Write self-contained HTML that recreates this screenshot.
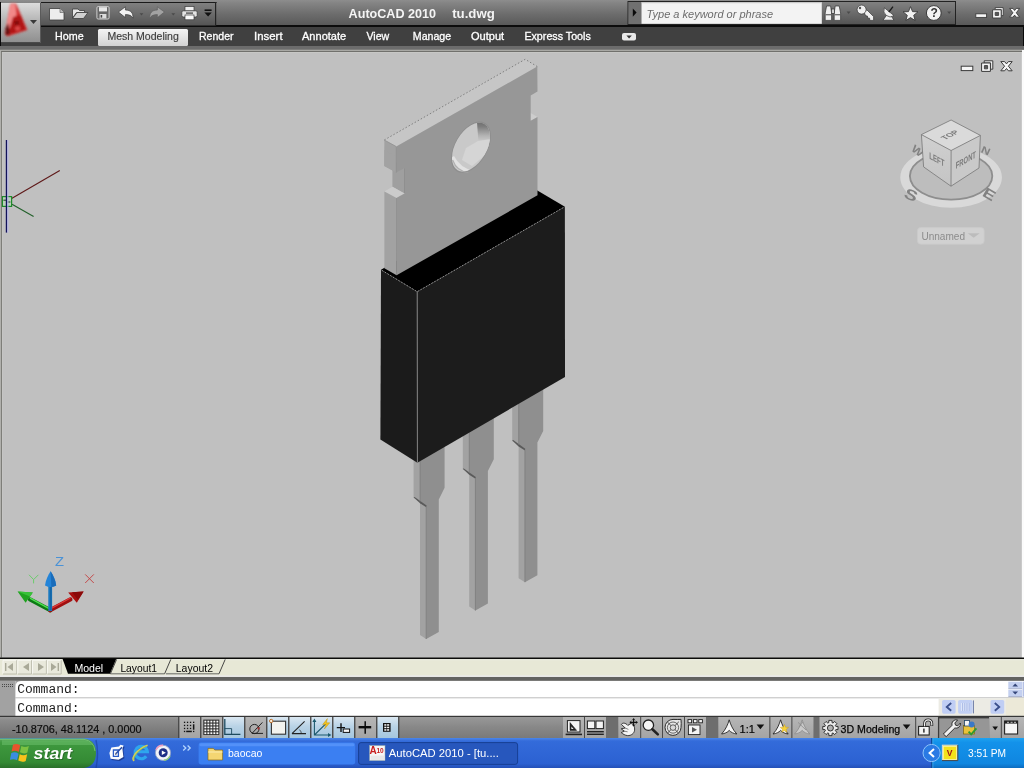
<!DOCTYPE html>
<html><head><meta charset="utf-8"><title>AutoCAD 2010</title>
<style>
html,body{margin:0;padding:0;background:#c0c0c0;overflow:hidden}
body{width:1024px;height:768px;position:relative;font-family:"Liberation Sans",sans-serif}
svg{position:absolute;left:0;top:0;display:block;will-change:transform;transform:translateZ(0)}
text{font-family:"Liberation Sans",sans-serif}
.mono{font-family:"Liberation Mono",monospace}
</style></head><body>
<svg width="1024" height="768" viewBox="0 0 1024 768">
<defs>
<linearGradient id="gTitle" x1="0" y1="0" x2="0" y2="1">
 <stop offset="0" stop-color="#8d8d8d"/><stop offset="0.12" stop-color="#848484"/>
 <stop offset="0.55" stop-color="#6c6c6c"/><stop offset="1" stop-color="#585858"/>
</linearGradient>
<linearGradient id="gQat" x1="0" y1="0" x2="0" y2="1">
 <stop offset="0" stop-color="#818181"/><stop offset="0.5" stop-color="#6b6b6b"/><stop offset="1" stop-color="#545454"/>
</linearGradient>
<linearGradient id="gTab" x1="0" y1="0" x2="0" y2="1">
 <stop offset="0" stop-color="#f4f4f4"/><stop offset="0.5" stop-color="#e4e4e4"/><stop offset="1" stop-color="#d2d2d2"/>
</linearGradient>
<linearGradient id="gApp" x1="0" y1="0" x2="0" y2="1">
 <stop offset="0" stop-color="#dcdcdc"/><stop offset="0.45" stop-color="#b4b4b4"/><stop offset="1" stop-color="#8e8e8e"/>
</linearGradient>
<linearGradient id="gStatus" x1="0" y1="0" x2="0" y2="1">
 <stop offset="0" stop-color="#9a9a9a"/><stop offset="0.5" stop-color="#888888"/><stop offset="1" stop-color="#7a7a7a"/>
</linearGradient>
<linearGradient id="gCoord" x1="0" y1="0" x2="0" y2="1">
 <stop offset="0" stop-color="#989898"/><stop offset="0.15" stop-color="#8c8c8c"/><stop offset="1" stop-color="#707070"/>
</linearGradient>
<linearGradient id="gBtnOff" x1="0" y1="0" x2="0" y2="1">
 <stop offset="0" stop-color="#b6b6b6"/><stop offset="1" stop-color="#a4a4a4"/>
</linearGradient>
<linearGradient id="gBtnOn" x1="0" y1="0" x2="0" y2="1">
 <stop offset="0" stop-color="#dbe8f2"/><stop offset="0.45" stop-color="#b9d3e6"/><stop offset="1" stop-color="#a5c6de"/>
</linearGradient>
<linearGradient id="gTask" x1="0" y1="0" x2="0" y2="1">
 <stop offset="0" stop-color="#4479e2"/><stop offset="0.12" stop-color="#336bda"/>
 <stop offset="0.85" stop-color="#2c61d2"/><stop offset="1" stop-color="#2450b8"/>
</linearGradient>
<linearGradient id="gStart" x1="0" y1="0" x2="0" y2="1">
 <stop offset="0" stop-color="#5aa65a"/><stop offset="0.15" stop-color="#3f993f"/>
 <stop offset="0.8" stop-color="#348a34"/><stop offset="1" stop-color="#2a702a"/>
</linearGradient>
<linearGradient id="gTray" x1="0" y1="0" x2="0" y2="1">
 <stop offset="0" stop-color="#1ea2f0"/><stop offset="0.15" stop-color="#1392ea"/>
 <stop offset="0.85" stop-color="#0f86e0"/><stop offset="1" stop-color="#0c6cc0"/>
</linearGradient>
<linearGradient id="gHole" x1="1" y1="0" x2="0.3" y2="0.7">
 <stop offset="0" stop-color="#6e6e6e"/><stop offset="0.22" stop-color="#9c9c9c"/>
 <stop offset="0.4" stop-color="#c6c6c6"/><stop offset="1" stop-color="#d0d0d0"/>
</linearGradient>
<linearGradient id="gHoleD" x1="0" y1="0" x2="0" y2="1">
 <stop offset="0" stop-color="#6a6a6a"/><stop offset="0.3" stop-color="#7c7c7c"/><stop offset="0.75" stop-color="#b4b4b4"/><stop offset="1" stop-color="#c9c9c9"/>
</linearGradient>
<linearGradient id="gCubeL" x1="0" y1="0" x2="0" y2="1">
 <stop offset="0" stop-color="#d0d0d0"/><stop offset="1" stop-color="#c4c4c4"/>
</linearGradient>
<filter id="fBlur2" x="-20%" y="-20%" width="140%" height="140%"><feGaussianBlur stdDeviation="0.9"/></filter>
<filter id="fBlur1" x="-20%" y="-20%" width="140%" height="140%"><feGaussianBlur stdDeviation="0.7"/></filter>
</defs>
<rect x="0" y="0" width="1024" height="768" fill="#c0c0c0"/>
<rect x="0" y="0" width="1024" height="26" fill="url(#gTitle)"/>
<rect x="0" y="25" width="1024" height="2" fill="#0c0c0c"/>
<rect x="0" y="27" width="1024" height="19" fill="#404040"/>
<rect x="0" y="46" width="1024" height="4" fill="#6c6c6c"/>
<rect x="0" y="49.7" width="1024" height="1.3" fill="#a8a8a4"/>
<rect x="0" y="51" width="1024" height="1" fill="#70706c"/>
<rect x="0" y="52" width="1024" height="0.6" fill="#cbcbc9"/>
<rect x="0" y="50" width="1.2" height="607.5" fill="#b0b0ac"/>
<rect x="1.2" y="51" width="0.8" height="606.5" fill="#6e6e6a"/>
<rect x="2" y="52" width="0.6" height="606" fill="#c8c8c6"/>
<rect x="1021.4" y="52" width="0.6" height="606" fill="#d0d0d0"/>
<rect x="1022" y="50" width="2" height="608" fill="#fcfcfc"/>
<rect x="0" y="2" width="1" height="44" fill="#0a0a0a"/>
<rect x="1023" y="27" width="1" height="19" fill="#0a0a0a"/>
<polygon points="512.2,343.2 518.7,347.2 518.7,444.8 512.2,441.1" fill="#a2a2a2"/>
<polygon points="518.6,444.7 524.9,449.7 524.9,582.2 518.6,578.2" fill="#a2a2a2"/>
<polygon points="518.7,347.2 543.2,333.2 543.2,430.9 537.4,442.6 537.4,575.2 524.9,582.2 524.9,449.7 518.7,444.8" fill="#8f8f8f"/>
<polygon points="512.2,440.5 513.2,440.1 525.2,448.8 524.9,450.4 518.6,446.4" fill="#5a5a5a"/>
<path d="M518.7,347.2V444.8M524.9,449.7V582.2" stroke="#7a7a7a" stroke-width="0.8" fill="none"/>
<polygon points="462.8,371.5 469.3,375.5 469.3,473.1 462.8,469.4" fill="#a2a2a2"/>
<polygon points="469.2,473.0 475.4,478.0 475.4,610.5 469.2,606.5" fill="#a2a2a2"/>
<polygon points="469.3,375.5 493.8,361.5 493.8,459.2 487.9,470.9 487.9,603.5 475.4,610.5 475.4,478.0 469.3,473.1" fill="#8f8f8f"/>
<polygon points="462.8,468.8 463.8,468.4 475.8,477.1 475.4,478.7 469.2,474.7" fill="#5a5a5a"/>
<path d="M469.3,375.5V473.1M475.4,478.0V610.5" stroke="#7a7a7a" stroke-width="0.8" fill="none"/>
<polygon points="413.6,400.0 420.1,404.0 420.1,501.6 413.6,497.9" fill="#a2a2a2"/>
<polygon points="420.0,501.5 426.2,506.5 426.2,639.0 420.0,635.0" fill="#a2a2a2"/>
<polygon points="420.1,404.0 444.6,390.0 444.6,487.7 438.8,499.4 438.8,632.0 426.2,639.0 426.2,506.5 420.1,501.6" fill="#8f8f8f"/>
<polygon points="413.6,497.3 414.6,496.9 426.6,505.6 426.2,507.2 420.0,503.2" fill="#5a5a5a"/>
<path d="M420.1,404.0V501.6M426.2,506.5V639.0" stroke="#7a7a7a" stroke-width="0.8" fill="none"/>
<polygon points="381.0,269.8 417.2,291.7 564.9,206.8 528.9,185.5" fill="#000000"/>
<polygon points="381.0,269.8 417.2,291.7 417.4,462.7 380.4,439.5" fill="#1b1b1b"/>
<polygon points="417.2,291.7 564.9,206.8 565.0,377.0 417.4,462.7" fill="#1c1c1c"/>
<path d="M417.2,291.7L417.4,462.7" stroke="#8a8a8a" stroke-width="0.9"/>
<path d="M382.0,270.40000000000003L417.2,291.7L563.9,207.20000000000002" stroke="#9a9a9a" stroke-width="0.9" stroke-dasharray="1.6 1.6" fill="none"/>
<polygon points="396.3,146.6 384.3,140.0 525.3,59.3 537.3,66.6" fill="#c6c6c6"/>
<polygon points="384.3,140.0 396.3,146.6 396.3,172.6 384.3,166.0" fill="#a2a2a2"/>
<polygon points="392.4,160.0 404.5,168.0 404.5,193.4 392.4,186.8" fill="#9f9f9f"/>
<polygon points="384.3,150.0 396.3,156.6 396.3,172.6 384.3,166.0" fill="#a2a2a2"/>
<polygon points="396.4,198.0 404.5,193.4 392.5,186.8 384.4,191.4" fill="#cbcbcb"/>
<polygon points="384.4,191.4 396.4,198.0 396.6,275.3 384.4,268.3" fill="#a2a2a2"/>
<polygon points="530.7,120.8 537.5,117.0 525.5,110.0 518.7,113.8" fill="#cdcdcd"/>
<polygon points="396.3,146.6 537.3,66.6 537.5,91.5 530.7,95.4 530.7,120.8 537.5,117.0 537.5,195.3 396.6,275.3 396.4,198.0 404.5,193.4 404.5,168.0 396.3,172.6" fill="#979797"/>
<path d="M384.3,140.0L525.2,59.3L537.3,66.6" stroke="#6e6e6e" stroke-width="0.8" stroke-dasharray="1.5 2" fill="none"/>
<path d="M384.3,140.0L396.3,146.6" stroke="#8c8c8c" stroke-width="0.7" fill="none"/>
<path d="M396.3,147V172.6M396.5,198V275" stroke="#8e8e8e" stroke-width="0.8" fill="none"/>
<path d="M404.5,168.2V193" stroke="#8a8a8a" stroke-width="0.8" fill="none"/>
<circle r="1.05" transform="matrix(19,-10.8,0,21.9,471.0,147.2)" fill="#8e8e8e"/>
<clipPath id="cpHole"><circle r="1" transform="matrix(19,-10.8,0,21.9,471.0,147.2)"/></clipPath>
<g clip-path="url(#cpHole)"><rect x="448" y="118" width="46" height="60" fill="#c9c9c9"/><polygon points="476.8,120 492,120 492,141 478.4,141" fill="url(#gHoleD)"/><g filter="url(#fBlur1)"><polygon points="466,148 478,141 491,139 491,150 472,166 462,160" fill="#d5d5d5"/><path d="M451,158 Q456,172 470,175 L474,171 Q460,168 454,156Z" fill="#e2e2e2"/></g></g>
<path d="M452.6,160 Q457,171.6 468.4,172.6" stroke="#a2a2a2" stroke-width="1.2" fill="none" opacity="0.8"/>
<rect x="1" y="3" width="40" height="40" fill="url(#gApp)"/>
<rect x="1" y="42" width="40" height="1" fill="#4a4a4a"/>
<rect x="40" y="3" width="1" height="40" fill="#5a5a5a"/>
<g filter="url(#fBlur2)"><polygon points="10.5,3.6 16,3.6 27.4,30 7,36.4 4.8,33.4" fill="#d42e2e"/><polygon points="10,4 15.4,3.8 16.4,15 9,29 5.6,32" fill="#f28888"/><polygon points="13,17 20.4,15 26,29.4 8,34.6" fill="#b01616"/><polygon points="5.6,28 8.6,23 9.6,34.4 5.6,35" fill="#5e1212"/><polygon points="14,21.4 18.4,20.4 19.4,24 15,25" fill="#7e0e0e"/><polygon points="15,27 19.4,26 20.4,30 16,31" fill="#dc4a4a"/></g>
<polygon points="30,20 37,20 33.5,24" fill="#3a3a3a"/>
<rect x="41" y="2.5" width="174.6" height="23" fill="url(#gQat)"/>
<rect x="41" y="2" width="175.6" height="1" fill="#1a1a1a"/>
<rect x="215" y="2" width="1.2" height="24" fill="#242424"/>
<path d="M49.5,8.5H60L64,12.5V20H49.5Z" fill="#ededed" stroke="#3c3c3c" stroke-width="0.8"/><path d="M60,8.5V12.5H64" fill="#bdbdbd" stroke="#555" stroke-width="0.6"/>
<path d="M72.5,9H78L79.5,10.5H84.5V12.5H76.5L72.5,18Z" fill="#e6e6e6" stroke="#3c3c3c" stroke-width="0.8"/><path d="M77,12.5H88L83.5,18.5H72.5Z" fill="#d0d0d0" stroke="#3c3c3c" stroke-width="0.8"/>
<rect x="96.9" y="6.6" width="12.2" height="12.4" rx="1.2" fill="#666" stroke="#cfcfcf" stroke-width="1"/><rect x="99" y="7.2" width="8" height="4.2" fill="#e8e8e8"/><rect x="99.6" y="14" width="6.8" height="4.4" fill="#dcdcdc"/><rect x="100.6" y="15" width="1.6" height="2.6" fill="#444"/>
<path d="M118.4,12L125.4,6.8V10C131,10 133.2,13 133,18.2C131.4,15.6 129.6,14.6 125.4,14.6V17.6Z" fill="#f2f2f2" stroke="#3c3c3c" stroke-width="0.7"/>
<polygon points="139.6,13.2 143.4,13.2 141.5,15.6" fill="#4a4a4a"/>
<path d="M164.4,12L157.4,6.8V10C151.8,10 149.6,13 149.8,18.2C151.4,15.6 153.2,14.6 157.4,14.6V17.6Z" fill="#a2a2a2" stroke="#5a5a5a" stroke-width="0.6"/>
<polygon points="171.4,13.2 175.2,13.2 173.3,15.6" fill="#4a4a4a"/>
<rect x="185" y="6.5" width="9" height="4.5" fill="#f0f0f0" stroke="#3c3c3c" stroke-width="0.7"/><rect x="181.8" y="10.8" width="15.4" height="6.2" rx="1.4" fill="#e4e4e4" stroke="#3c3c3c" stroke-width="0.8"/><rect x="185" y="15" width="9" height="4.8" fill="#fafafa" stroke="#3c3c3c" stroke-width="0.7"/><rect x="186" y="12.4" width="7" height="1.4" fill="#555"/>
<rect x="204.6" y="9.4" width="7" height="1.6" fill="#111"/><polygon points="204.4,12.4 211.8,12.4 208.1,16.4" fill="#111"/>
<text x="348.6" y="18.2" font-size="13.6" font-weight="bold" fill="#f4f4f4" textLength="87.5" lengthAdjust="spacingAndGlyphs">AutoCAD 2010</text>
<text x="452.2" y="18.2" font-size="13.6" font-weight="bold" fill="#f4f4f4" textLength="42.6" lengthAdjust="spacingAndGlyphs">tu.dwg</text>
<rect x="628" y="1.5" width="327.5" height="23" fill="#676767" stroke="#222" stroke-width="1"/>
<rect x="822" y="2" width="133" height="22" fill="url(#gQat)"/>
<rect x="628.5" y="2" width="13" height="22" fill="#707070"/>
<polygon points="632.8,8.5 636.6,12.6 632.8,16.8" fill="#0a0a0a"/>
<rect x="641.5" y="2.2" width="180.3" height="21.6" fill="#f3f3f3"/>
<rect x="641.5" y="2.2" width="180.3" height="1" fill="#c8c8c8"/>
<text x="646.6" y="17.6" font-size="11" font-style="italic" fill="#6c6c6c" textLength="126.5" lengthAdjust="spacingAndGlyphs">Type a keyword or phrase</text>
<g stroke="#333" stroke-width="0.7" fill="#efefef"><path d="M826.6,6H830.6L831.6,13V20.4H825.2V13Z"/><path d="M835.2,6H839.2L840.6,13V20.4H834.2V13Z"/><rect x="831.4" y="9" width="3" height="4.4" fill="#cfcfcf"/></g><rect x="825.6" y="14.2" width="5.6" height="1.1" fill="#555"/><rect x="834.6" y="14.2" width="5.6" height="1.1" fill="#555"/>
<polygon points="846.6,11.4 850.6,11.4 848.6,14" fill="#4a4a4a"/>
<g fill="#efefef" stroke="#333" stroke-width="0.7"><path d="M864.2,12.4L866.8,9.8L873.6,16.6V20.4H869.8L869.6,18.2L867.6,18L867.4,16L865.6,15.8Z"/><circle cx="861.6" cy="9.6" r="4.5"/></g><circle cx="860" cy="8" r="1.2" fill="#555"/>
<g fill="#efefef" stroke="#333" stroke-width="0.7"><path d="M886.6,15.2L883,20.2H894L890.8,15.6Z"/><path d="M884.4,7.8A6.4,6.4 0 0 0 894,15.6Z"/></g><path d="M888.8,12L893,6.6" stroke="#1a1a1a" stroke-width="1.3"/>
<path d="M910.5,6.6L912.5,11.6L917.9,11.9L913.7,15.3L915.1,20.5L910.5,17.6L905.9,20.5L907.3,15.3L903.1,11.9L908.5,11.6Z" fill="#f2f2f2" stroke="#2e2e2e" stroke-width="0.8"/>
<circle cx="933.8" cy="13" r="7.4" fill="#f2f2f2" stroke="#2e2e2e" stroke-width="0.9"/><text x="930.4" y="17.4" font-size="12" font-weight="bold" fill="#333">?</text>
<polygon points="947.2,11.4 951.2,11.4 949.2,14" fill="#4a4a4a"/>
<g fill="#f6f6f6" stroke="#3c3c3c" stroke-width="0.9"><rect x="975.8" y="13.8" width="10.8" height="3.6"/><path d="M995.2,7.6H1003.2V15.6H1001.2V9.6H995.2Z"/><path d="M992.6,9.8H1001.2V18H992.6ZM995.2,12.4V15.4H998.6V12.4Z" fill-rule="evenodd"/><path d="M1009.6,8.4L1013.0,8.4L1014.6,10.5L1016.2,8.4L1019.6,8.4L1016.3,12.8L1019.6,17.2L1016.2,17.2L1014.6,15.1L1013.0,17.2L1009.6,17.2L1012.9,12.8Z"/></g><rect x="995.4" y="12.6" width="3" height="2.6" fill="#555"/>
<rect x="98" y="29" width="90" height="17" rx="1.5" fill="url(#gTab)"/>
<text x="55" y="40" font-size="11" fill="#fff" stroke="#ffffff" stroke-width="0.3" textLength="28.6" lengthAdjust="spacingAndGlyphs">Home</text>
<text x="107.4" y="40" font-size="11" fill="#3c3c3c" stroke="#3c3c3c" stroke-width="0.15" textLength="71.4" lengthAdjust="spacingAndGlyphs">Mesh Modeling</text>
<text x="199" y="40" font-size="11" fill="#fff" stroke="#ffffff" stroke-width="0.3" textLength="34.6" lengthAdjust="spacingAndGlyphs">Render</text>
<text x="254" y="40" font-size="11" fill="#fff" stroke="#ffffff" stroke-width="0.3" textLength="28.6" lengthAdjust="spacingAndGlyphs">Insert</text>
<text x="302" y="40" font-size="11" fill="#fff" stroke="#ffffff" stroke-width="0.3" textLength="44.2" lengthAdjust="spacingAndGlyphs">Annotate</text>
<text x="366.4" y="40" font-size="11" fill="#fff" stroke="#ffffff" stroke-width="0.3" textLength="22.8" lengthAdjust="spacingAndGlyphs">View</text>
<text x="412.8" y="40" font-size="11" fill="#fff" stroke="#ffffff" stroke-width="0.3" textLength="38.4" lengthAdjust="spacingAndGlyphs">Manage</text>
<text x="471" y="40" font-size="11" fill="#fff" stroke="#ffffff" stroke-width="0.3" textLength="33.2" lengthAdjust="spacingAndGlyphs">Output</text>
<text x="524.4" y="40" font-size="11" fill="#fff" stroke="#ffffff" stroke-width="0.3" textLength="66.4" lengthAdjust="spacingAndGlyphs">Express Tools</text>
<rect x="622" y="33" width="14" height="7.4" rx="2" fill="#e8e8e8"/><polygon points="626.4,35.4 631.8,35.4 629.1,38.4" fill="#333"/>
<g fill="#f6f6f6" stroke="#3a3a3a" stroke-width="1"><rect x="961.2" y="66.2" width="11.6" height="4.4"/><path d="M984.2,60.8H992.8V69.2H990.6V63H984.2Z"/><path d="M981.6,63H990.4V71.4H981.6ZM984.4,65.6V68.8H987.6V65.6Z" fill-rule="evenodd"/><path d="M1000.8,61.6L1004.6,61.6L1006.5,63.9L1008.4,61.6L1012.2,61.6L1008.4,66.2L1012.2,70.8L1008.4,70.8L1006.5,68.5L1004.6,70.8L1000.8,70.8L1004.6,66.2Z"/></g><rect x="984.6" y="65.8" width="2.8" height="2.8" fill="#5a5a5a"/>
<rect x="0" y="657.5" width="1024" height="1.7" fill="#0c0c0a"/>
<rect x="0" y="659.2" width="1024" height="16.3" fill="#e7e8d6"/><rect x="0" y="659.2" width="1024" height="1" fill="#eeeee4"/>
<rect x="0" y="675.5" width="1024" height="1.4" fill="#fdfdfb"/>
<rect x="2.6" y="659.8" width="14.2" height="14.2" fill="#e9e9dc"/><path d="M3.0,674V660.2H16.8" stroke="#fbfbf6" stroke-width="0.9" fill="none"/><path d="M3.0,674H16.8V660.2" stroke="#b9b9aa" stroke-width="0.9" fill="none"/>
<rect x="17.4" y="659.8" width="14.2" height="14.2" fill="#e9e9dc"/><path d="M17.799999999999997,674V660.2H31.599999999999998" stroke="#fbfbf6" stroke-width="0.9" fill="none"/><path d="M17.799999999999997,674H31.599999999999998V660.2" stroke="#b9b9aa" stroke-width="0.9" fill="none"/>
<rect x="32.2" y="659.8" width="14.2" height="14.2" fill="#e9e9dc"/><path d="M32.6,674V660.2H46.400000000000006" stroke="#fbfbf6" stroke-width="0.9" fill="none"/><path d="M32.6,674H46.400000000000006V660.2" stroke="#b9b9aa" stroke-width="0.9" fill="none"/>
<rect x="47" y="659.8" width="14.2" height="14.2" fill="#e9e9dc"/><path d="M47.4,674V660.2H61.2" stroke="#fbfbf6" stroke-width="0.9" fill="none"/><path d="M47.4,674H61.2V660.2" stroke="#b9b9aa" stroke-width="0.9" fill="none"/>
<g fill="#a9a998"><rect x="5" y="663" width="1.4" height="8"/><polygon points="13,663 13,671 7.5,667"/><polygon points="29,663 29,671 23,667"/><polygon points="38,663 38,671 44,667"/><polygon points="51,663 51,671 56.5,667"/><rect x="57.6" y="663" width="1.4" height="8"/></g>
<polygon points="62.6,659 116.2,659 110,673.8 68,673.8" fill="#000"/>
<text x="74.4" y="671.8" font-size="11" fill="#fff" textLength="28.8" lengthAdjust="spacingAndGlyphs">Model</text>
<text x="120.4" y="671.8" font-size="11" fill="#000" textLength="36.6" lengthAdjust="spacingAndGlyphs">Layout1</text>
<text x="175.8" y="671.8" font-size="11" fill="#000" textLength="37.2" lengthAdjust="spacingAndGlyphs">Layout2</text>
<path d="M110.4,673.8L116.6,659.4M164.6,673.8L170.8,659.4M219,673.8L225.2,659.4" stroke="#333" stroke-width="0.9" fill="none"/><path d="M110.4,673.8H164.6M166,673.8H219" stroke="#4a4a4a" stroke-width="0.8" fill="none"/>
<path d="M117,660.5H170M171.5,660.5H225" stroke="#fff" stroke-width="0.6" fill="none" opacity="0"/>
<rect x="0" y="676.9" width="1024" height="4" fill="#626260"/>
<rect x="0" y="680.9" width="1024" height="35.1" fill="#ffffff"/>
<rect x="0" y="680.9" width="15.4" height="35.1" fill="#a2a2a2"/><path d="M15.4,687V681H21Q15.4,681 15.4,687Z" fill="#a2a2a2"/>
<path d="M15,716V684Q15,680.6 18.5,680.6" stroke="#888" stroke-width="0" fill="none"/>
<g fill="#4a4a4a"><rect x="2" y="684" width="1" height="1"/><rect x="2" y="686" width="1" height="1"/><rect x="4" y="684" width="1" height="1"/><rect x="4" y="686" width="1" height="1"/><rect x="6" y="684" width="1" height="1"/><rect x="6" y="686" width="1" height="1"/><rect x="8" y="684" width="1" height="1"/><rect x="8" y="686" width="1" height="1"/><rect x="10" y="684" width="1" height="1"/><rect x="10" y="686" width="1" height="1"/><rect x="12" y="684" width="1" height="1"/><rect x="12" y="686" width="1" height="1"/></g>
<rect x="15" y="697.3" width="1009" height="1" fill="#bcbcbc"/>
<text class="mono" x="17.2" y="693.2" font-size="12" fill="#1c1c1c" textLength="62.4" lengthAdjust="spacingAndGlyphs">Command:</text>
<text class="mono" x="17.2" y="712" font-size="12" fill="#1c1c1c" textLength="62.4" lengthAdjust="spacingAndGlyphs">Command:</text>
<rect x="1008.3" y="681.7" width="13.8" height="6.5" fill="#c4d0f0"/><rect x="1008.3" y="689.7" width="13.8" height="6.4" fill="#c4d0f0"/><rect x="1008.3" y="688.3" width="13.8" height="0.8" fill="#9aa6c6"/><rect x="1008.3" y="696.2" width="13.8" height="0.8" fill="#9aa6c6"/><rect x="1022.6" y="681.7" width="1.4" height="15" fill="#b4c0e4"/><polygon points="1012.4,686.4 1015.2,683.4 1018,686.4" fill="#35467a"/><polygon points="1012.4,691.6 1015.2,694.6 1018,691.6" fill="#35467a"/>
<rect x="938.6" y="698.3" width="85.4" height="17.5" fill="#ecebe4"/>
<rect x="1006" y="698.3" width="18" height="17.5" fill="#ece9d8"/>
<rect x="942.1" y="699.9" width="13.5" height="13.8" rx="1.6" fill="#c0cef4"/><rect x="990.5" y="699.9" width="13.7" height="13.8" rx="1.6" fill="#c0cef4"/><rect x="958.1" y="699.9" width="14.6" height="13.8" rx="1.6" fill="#c2d0f4"/><rect x="973" y="700.4" width="0.8" height="13" fill="#5c6c9c"/>
<path d="M951.2,703L946.8,706.9L951.2,710.8M994.8,703L999.2,706.9L994.8,710.8" stroke="#3a4f8c" stroke-width="1.9" fill="none"/>
<path d="M961.6,703V711M963.8,703V711M966,703V711M968.2,703V711" stroke="#e4ebfb" stroke-width="0.9"/><path d="M962.5,703V711M964.7,703V711M966.9,703V711M969.1,703V711" stroke="#9fb0dc" stroke-width="0.6"/>
<rect x="0" y="716" width="1024" height="22" fill="url(#gStatus)"/>
<rect x="0" y="715.8" width="1024" height="1.1" fill="#2c2c2c"/>
<rect x="0" y="717" width="178" height="21" fill="url(#gCoord)"/>
<text x="12" y="732.6" font-size="11" fill="#0c0c0c" stroke="#0c0c0c" stroke-width="0.2" textLength="129.5" lengthAdjust="spacingAndGlyphs">-10.8706, 48.1124 , 0.0000</text>
<rect x="179.3" y="717" width="21" height="21" fill="url(#gBtnOff)"/>
<rect x="178.2" y="717" width="1.1" height="21" fill="#3c3c3c"/>
<rect x="201.3" y="717" width="21" height="21" fill="url(#gBtnOff)"/>
<rect x="200.2" y="717" width="1.1" height="21" fill="#3c3c3c"/>
<rect x="223.3" y="717" width="21" height="21" fill="url(#gBtnOn)"/>
<rect x="222.2" y="717" width="1.1" height="21" fill="#3c3c3c"/>
<rect x="245.3" y="717" width="21" height="21" fill="url(#gBtnOff)"/>
<rect x="244.2" y="717" width="1.1" height="21" fill="#3c3c3c"/>
<rect x="267.3" y="717" width="21" height="21" fill="url(#gBtnOn)"/>
<rect x="266.2" y="717" width="1.1" height="21" fill="#3c3c3c"/>
<rect x="289.3" y="717" width="21" height="21" fill="url(#gBtnOn)"/>
<rect x="288.2" y="717" width="1.1" height="21" fill="#3c3c3c"/>
<rect x="311.3" y="717" width="21" height="21" fill="url(#gBtnOn)"/>
<rect x="310.2" y="717" width="1.1" height="21" fill="#3c3c3c"/>
<rect x="333.3" y="717" width="21" height="21" fill="url(#gBtnOn)"/>
<rect x="332.2" y="717" width="1.1" height="21" fill="#3c3c3c"/>
<rect x="355.3" y="717" width="21" height="21" fill="url(#gBtnOff)"/>
<rect x="354.2" y="717" width="1.1" height="21" fill="#3c3c3c"/>
<rect x="377.3" y="717" width="21" height="21" fill="url(#gBtnOn)"/>
<rect x="376.2" y="717" width="1.1" height="21" fill="#3c3c3c"/>
<rect x="398.2" y="717" width="1.1" height="21" fill="#3c3c3c"/>
<g fill="#141414"><rect x="183.9" y="721.6999999999999" width="1.3" height="1.3"/><rect x="183.9" y="724.8" width="1.3" height="1.3"/><rect x="183.9" y="727.8" width="1.3" height="1.3"/><rect x="186.9" y="721.6999999999999" width="1.3" height="1.3"/><rect x="186.9" y="724.8" width="1.3" height="1.3"/><rect x="186.9" y="727.8" width="1.3" height="1.3"/><rect x="189.9" y="721.6999999999999" width="1.3" height="1.3"/><rect x="189.9" y="724.8" width="1.3" height="1.3"/><rect x="189.9" y="727.8" width="1.3" height="1.3"/><rect x="193.0" y="721.6999999999999" width="1.3" height="1.3"/><rect x="193.0" y="730.8" width="1.3" height="1.3"/><rect x="192.9" y="724.3" width="1.5" height="5.4"/><rect x="183.9" y="730.8" width="1.3" height="1.3"/><rect x="186.2" y="730.7" width="5.6" height="1.5"/></g>
<rect x="203.3" y="719.6" width="16" height="15.4" fill="#2e2e2e"/><g fill="#fafafa"><rect x="204.4" y="720.7" width="1.9" height="1.8"/><rect x="204.4" y="723.6" width="1.9" height="1.8"/><rect x="204.4" y="726.5" width="1.9" height="1.8"/><rect x="204.4" y="729.4" width="1.9" height="1.8"/><rect x="204.4" y="732.3" width="1.9" height="1.8"/><rect x="207.4" y="720.7" width="1.9" height="1.8"/><rect x="207.4" y="723.6" width="1.9" height="1.8"/><rect x="207.4" y="726.5" width="1.9" height="1.8"/><rect x="207.4" y="729.4" width="1.9" height="1.8"/><rect x="207.4" y="732.3" width="1.9" height="1.8"/><rect x="210.4" y="720.7" width="1.9" height="1.8"/><rect x="210.4" y="723.6" width="1.9" height="1.8"/><rect x="210.4" y="726.5" width="1.9" height="1.8"/><rect x="210.4" y="729.4" width="1.9" height="1.8"/><rect x="210.4" y="732.3" width="1.9" height="1.8"/><rect x="213.4" y="720.7" width="1.9" height="1.8"/><rect x="213.4" y="723.6" width="1.9" height="1.8"/><rect x="213.4" y="726.5" width="1.9" height="1.8"/><rect x="213.4" y="729.4" width="1.9" height="1.8"/><rect x="213.4" y="732.3" width="1.9" height="1.8"/><rect x="216.4" y="720.7" width="1.9" height="1.8"/><rect x="216.4" y="723.6" width="1.9" height="1.8"/><rect x="216.4" y="726.5" width="1.9" height="1.8"/><rect x="216.4" y="729.4" width="1.9" height="1.8"/><rect x="216.4" y="732.3" width="1.9" height="1.8"/></g>
<path d="M224.8,719V734.4H240.4" stroke="#1d4a5e" stroke-width="1.3" fill="none"/><path d="M224.8,728.6H231.6V734.4" stroke="#1d4a5e" stroke-width="0.9" fill="none"/>
<circle cx="254.4" cy="729" r="4.6" fill="none" stroke="#222" stroke-width="1"/><path d="M252,733.4H263M252,733.4L262.4,722.4" stroke="#222" stroke-width="1" fill="none"/><path d="M257,727.4L260.4,727.4L258.4,730Z" fill="#a33"/>
<rect x="271.4" y="721.2" width="14.2" height="13" fill="#f3f3ee" stroke="#333" stroke-width="1.1"/><circle cx="271.2" cy="721" r="1.7" fill="#fbeeda" stroke="#b5651d" stroke-width="0.9"/>
<path d="M292,733.6H306M292,733.6L304.6,721.4" stroke="#222" stroke-width="1.1" fill="none"/><path d="M299.4,729.6A6,6 0 0 1 301.4,733.4" stroke="#222" stroke-width="0.7" fill="none"/>
<path d="M314.4,720V735H329.6M314.4,735L326,723.6" stroke="#1d5a6e" stroke-width="1.1" fill="none"/><polygon points="312.4,722 314.4,718.6 316.4,722" fill="#1d5a6e"/><polygon points="328,733 331.4,735 328,737" fill="#1d5a6e"/><path d="M327.4,718.6L322.6,724.6H326L324.4,729L329.8,722.8H326.4Z" fill="#f2c21a" stroke="#b88a0a" stroke-width="0.4"/>
<path d="M336.8,727.6H345M341,723.2V732" stroke="#111" stroke-width="1.4"/><rect x="343.2" y="729" width="6.4" height="3.4" fill="#f6f6f6" stroke="#111" stroke-width="1"/>
<path d="M358.6,727.2H371.2" stroke="#0a0a0a" stroke-width="2.4"/><path d="M365.2,721.2V733.8" stroke="#0a0a0a" stroke-width="1.5"/>
<rect x="383" y="723" width="7.6" height="8.8" fill="#111"/><g fill="#fafafa"><rect x="384.3" y="724.2" width="2.1" height="1.5"/><rect x="384.3" y="726.7" width="2.1" height="1.5"/><rect x="384.3" y="729.2" width="2.1" height="1.5"/><rect x="387.1" y="724.2" width="2.1" height="1.5"/><rect x="387.1" y="726.7" width="2.1" height="1.5"/><rect x="387.1" y="729.2" width="2.1" height="1.5"/></g>
<rect x="563" y="717" width="21" height="21" fill="url(#gBtnOff)"/>
<rect x="584.6" y="717" width="21.4" height="21" fill="url(#gBtnOff)"/>
<rect x="606" y="717" width="12.4" height="21" fill="#6e6e6e"/>
<rect x="618.4" y="717" width="22" height="21" fill="url(#gBtnOff)"/>
<rect x="640.8" y="717" width="21.4" height="21" fill="url(#gBtnOff)"/>
<rect x="662.6" y="717" width="21.6" height="21" fill="url(#gBtnOff)"/>
<rect x="684.6" y="717" width="21.4" height="21" fill="url(#gBtnOff)"/>
<rect x="706" y="717" width="12.4" height="21" fill="#6e6e6e"/>
<rect x="718.4" y="717" width="51" height="21" fill="url(#gBtnOff)"/>
<rect x="770" y="717" width="21.6" height="21" fill="url(#gBtnOff)"/>
<rect x="792" y="717" width="21.6" height="21" fill="url(#gBtnOff)"/>
<rect x="813.6" y="717" width="6" height="21" fill="#6e6e6e"/>
<rect x="819.6" y="717" width="95.6" height="21" fill="url(#gBtnOff)"/>
<rect x="915.8" y="717" width="22" height="21" fill="url(#gBtnOff)"/>
<rect x="938" y="717" width="51" height="21" fill="#969696"/><rect x="938" y="717" width="51" height="1.4" fill="#3c3c3c"/><rect x="938" y="717" width="1.2" height="21" fill="#3c3c3c"/>
<rect x="989.4" y="717" width="11.6" height="21" fill="url(#gBtnOff)"/>
<rect x="1001.4" y="717" width="22.6" height="21" fill="url(#gBtnOff)"/>
<rect x="584.0" y="717" width="1" height="21" fill="#4a4a4a"/>
<rect x="640.1999999999999" y="717" width="1" height="21" fill="#4a4a4a"/>
<rect x="662.0" y="717" width="1" height="21" fill="#4a4a4a"/>
<rect x="684.0" y="717" width="1" height="21" fill="#4a4a4a"/>
<rect x="769.4" y="717" width="1" height="21" fill="#4a4a4a"/>
<rect x="791.4" y="717" width="1" height="21" fill="#4a4a4a"/>
<rect x="915.1999999999999" y="717" width="1" height="21" fill="#4a4a4a"/>
<rect x="1000.8" y="717" width="1" height="21" fill="#4a4a4a"/>
<rect x="567.4" y="720.6" width="12.6" height="11.4" fill="#f4f4f4" stroke="#222" stroke-width="1"/><path d="M570,722.6V730.4H576.6Z" fill="#222" stroke="#222" stroke-width="0.6"/><path d="M571.4,726.4V729H573.6Z" fill="#f4f4f4"/><rect x="565.6" y="733.6" width="16.4" height="1.6" fill="#222"/>
<rect x="587.4" y="721" width="7.4" height="7.6" fill="#f4f4f4" stroke="#222" stroke-width="1"/><rect x="596" y="721" width="7.4" height="7.6" fill="#f4f4f4" stroke="#222" stroke-width="1"/><rect x="587" y="731" width="16.8" height="1.4" fill="#222"/><rect x="587" y="733.6" width="16.8" height="1.4" fill="#222"/>
<path d="M621.4,724.4C622.6,722.4 625.6,722.8 627.8,725.4L631.4,723.2C633.6,724 635,727 634.6,730.2C634.2,733.4 631.2,735.8 627.6,735.6C625,735.4 623,734 621.2,732.6L624.4,731.2L621.2,728.8L625.2,728Z" fill="#f4f4f4" stroke="#2a2a2a" stroke-width="0.9" stroke-linejoin="round"/><path d="M625.2,728L628.4,729.4M624.4,731.2L627.6,731.8" stroke="#555" stroke-width="0.7"/><path d="M633.6,718.8V726M630,722.4H637.2" stroke="#111" stroke-width="1.1"/><path d="M632.4,720.2L633.6,718.6L634.8,720.2M632.4,724.6L633.6,726.2L634.8,724.6M631.4,721.2L629.8,722.4L631.4,723.6M635.8,721.2L637.4,722.4L635.8,723.6" stroke="#111" stroke-width="0.8" fill="none"/>
<circle cx="648.4" cy="725.2" r="5.2" fill="#f4f4f4" stroke="#222" stroke-width="1.3"/><path d="M652.4,729.2L657.8,734.4" stroke="#222" stroke-width="2.6" stroke-linecap="round"/>
<path d="M673,719.4C676,719.4 678.6,719.6 681,719.4C681.4,722 681.2,725 681,727.6A8,8 0 1 1 673,719.4Z" fill="#e6e6e6" stroke="#2e2e2e" stroke-width="1"/><circle cx="673" cy="727.6" r="5.6" fill="none" stroke="#444" stroke-width="0.8"/><path d="M667.4,722L678.6,733.2M678.8,721.8L667.4,733.2" stroke="#3a3a3a" stroke-width="0.9"/><circle cx="673" cy="727.6" r="2.8" fill="#d8d8d8" stroke="#444" stroke-width="0.8"/>
<g fill="#f4f4f4" stroke="#222" stroke-width="0.9"><rect x="688" y="719.6" width="3.6" height="3.2"/><rect x="693.4" y="719.6" width="3.6" height="3.2"/><rect x="698.8" y="719.6" width="3.6" height="3.2"/><rect x="688.4" y="725" width="11.6" height="9.6"/></g><polygon points="692,727 692,732.6 697,729.8" fill="#555"/>
<path d="M729.2,719.8C730.4000000000001,724 732.6,729.6 736.8000000000001,734C733.6,733.6 731.0,732.4 729.2,730.4C727.4000000000001,732.4 724.8000000000001,733.6 721.6,734C725.8000000000001,729.6 728.0,724 729.2,719.8Z" fill="#f6f6f6" stroke="#222" stroke-width="0.9"/>
<text x="739.6" y="732.6" font-size="11.5" fill="#050505" stroke="#050505" stroke-width="0.2" textLength="15.4" lengthAdjust="spacingAndGlyphs">1:1</text>
<polygon points="756.6,724.6 764.2,724.6 760.4,729.2" fill="#111"/>
<path d="M780.6,719.8C781.8000000000001,724 784.0,729.6 788.2,734C785.0,733.6 782.4,732.4 780.6,730.4C778.8000000000001,732.4 776.2,733.6 773.0,734C777.2,729.6 779.4,724 780.6,719.8Z" fill="#f6f6f6" stroke="#222" stroke-width="0.9"/><path d="M784.4,724.4L785.6,727.2L788.6,727.4L786.2,729.2L787,732.2L784.4,730.6L781.8,732.2L782.6,729.2L780.2,727.4L783.2,727.2Z" fill="#f6d23a" stroke="#c79a10" stroke-width="0.4"/>
<path d="M802.2,719.8C803.4000000000001,724 805.6,729.6 809.8000000000001,734C806.6,733.6 804.0,732.4 802.2,730.4C800.4000000000001,732.4 797.8000000000001,733.6 794.6,734C798.8000000000001,729.6 801.0,724 802.2,719.8Z" fill="#cacaca" stroke="#8e8e8e" stroke-width="0.9"/><path d="M798,722.4L806,730M799,727L803,722" stroke="#8a8a8a" stroke-width="0.8"/>
<g transform="translate(830.4,728)"><path d="M7.64,-1.55L7.64,1.55L5.35,1.65L4.95,2.61L6.50,4.31L4.31,6.50L2.61,4.95L1.65,5.35L1.55,7.64L-1.55,7.64L-1.65,5.35L-2.61,4.95L-4.31,6.50L-6.50,4.31L-4.95,2.61L-5.35,1.65L-7.64,1.55L-7.64,-1.55L-5.35,-1.65L-4.95,-2.61L-6.50,-4.31L-4.31,-6.50L-2.61,-4.95L-1.65,-5.35L-1.55,-7.64L1.55,-7.64L1.65,-5.35L2.61,-4.95L4.31,-6.50L6.50,-4.31L4.95,-2.61L5.35,-1.65Z" fill="#ececec" stroke="#222" stroke-width="0.9"/><circle r="3" fill="#b0b0b0" stroke="#222" stroke-width="0.9"/></g>
<text x="840.6" y="732.6" font-size="11.5" fill="#050505" stroke="#050505" stroke-width="0.25" textLength="59.6" lengthAdjust="spacingAndGlyphs">3D Modeling</text>
<polygon points="902.8,724.6 910.4,724.6 906.6,729.2" fill="#111"/>
<rect x="918.6" y="726.4" width="10.6" height="8.6" fill="#f4f4f4" stroke="#222" stroke-width="1.1"/><path d="M924.6,726.4V723.4A3.6,3.6 0 0 1 931.8,723.4V726" fill="none" stroke="#222" stroke-width="2.8"/><path d="M924.6,726.2V723.4A3.6,3.6 0 0 1 931.8,723.4V725.6" fill="none" stroke="#f4f4f4" stroke-width="1.2"/><rect x="923.2" y="728.6" width="1.4" height="4" fill="#222"/>
<path d="M943.4,734L952,725.4A4.4,4.4 0 0 1 957.6,720L954.8,723L955.6,725.2L957.8,725.8L960.4,723A4.4,4.4 0 0 1 954.8,728L946.2,736.6Z" fill="#f2f2f2" stroke="#222" stroke-width="0.9"/>
<rect x="963.6" y="725.6" width="11" height="8.4" fill="#e9c23a" stroke="#7a6410" stroke-width="0.7"/><rect x="964.6" y="720.6" width="5" height="5.4" fill="#f4f4f4" stroke="#246" stroke-width="0.8"/><circle cx="971.6" cy="724.4" r="3" fill="#3a78c8"/><path d="M968.6,731.6L971.2,734.4L976.4,728.4" stroke="#2e9a2e" stroke-width="1.8" fill="none"/>
<polygon points="992.4,726.4 998,726.4 995.2,730.2" fill="#111"/>
<rect x="1004.6" y="721" width="13" height="13" fill="#f6f6f6" stroke="#222" stroke-width="1.1"/><rect x="1004.6" y="721" width="13" height="2.6" fill="#222"/><path d="M1007,722.3H1009M1010.6,722.3H1012.6M1014,722.3H1016" stroke="#eee" stroke-width="0.8"/>
<rect x="0" y="738" width="1024" height="30" fill="url(#gTask)"/>
<rect x="0" y="738" width="1024" height="1.4" fill="#4682e8"/>
<path d="M0,738.4H84Q96,740 96,753Q96,766 84,768H0Z" fill="url(#gStart)"/>
<path d="M0,739.4H84Q94,741 95,751" stroke="#7cc47c" stroke-width="1" fill="none" opacity="0.8"/>
<path d="M96,740Q99,753 96,768" stroke="#1a3f9a" stroke-width="1.4" fill="none" opacity="0.6"/>
<path d="M2,740.2H84Q91,741 93.4,745H2Z" fill="#6cbf6c" opacity="0.55"/>
<g transform="translate(10.6,744) scale(1.2,1.34)"><path d="M2,0.6C4,-0.4 6,-0.2 8,1L6.8,6C5,5 3,4.8 0.8,5.6Z" fill="#e8542c"/><path d="M9,1.4C11,2.4 13,2.4 15.2,1.4L14,6.4C12,7.4 10,7.2 7.8,6.2Z" fill="#7cc242"/><path d="M0.6,6.8C2.6,5.8 4.6,6 6.6,7.2L5.4,12.2C3.6,11.2 1.6,11 -0.6,11.8Z" fill="#3a8de0"/><path d="M7.6,7.6C9.6,8.6 11.6,8.6 13.8,7.6L12.6,12.6C10.6,13.6 8.6,13.4 6.4,12.4Z" fill="#f8c21c"/></g>
<text x="34.6" y="760.4" font-size="16.4" font-weight="bold" font-style="italic" fill="#1f4f1f" opacity="0.55" textLength="38.6" lengthAdjust="spacingAndGlyphs">start</text>
<text x="33.6" y="759.4" font-size="16.4" font-weight="bold" font-style="italic" fill="#fff" textLength="38.6" lengthAdjust="spacingAndGlyphs">start</text>
<path d="M111.4,747.6L119,746.4L120.4,744.8L123.6,745.6L122.4,748.8L123.4,757L118.6,759.8L110.6,758.8L109.4,753Z" fill="#1c3c94" transform="translate(1,1.2)"/><path d="M111.4,747.6L119,746.4L120.4,744.8L123.6,745.6L122.4,748.8L123.4,757L118.6,759.8L110.6,758.8L109.4,753Z" fill="#fbfdff"/><path d="M113.4,750H118.4V756.4H113.4Z" fill="none" stroke="#2a5cc4" stroke-width="1.3"/><path d="M116,753.6L122,747.2" stroke="#2a4ea8" stroke-width="1.5"/><path d="M115,754.8L116.8,754.2L115.6,753Z" fill="#223"/>
<path d="M146.2,756.2A6.2,6.2 0 1 1 147.4,751.8H136.4" fill="none" stroke="#2ea6ee" stroke-width="3.1"/><path d="M134,761C131,758 137,749 147.6,745.2" fill="none" stroke="#d8cf52" stroke-width="1.7"/><path d="M134.4,760.4C132.6,757.6 138,750.4 146,746.6" fill="none" stroke="#7fbf5a" stroke-width="0.8"/>
<circle cx="163" cy="752.8" r="7.6" fill="#f1f3f8" stroke="#8fa2c8" stroke-width="0.9"/><path d="M156,750A7.4,7.4 0 0 1 163,745.4" stroke="#f0a0c0" stroke-width="1.6" fill="none"/><path d="M170,756A7.4,7.4 0 0 1 164,760.2" stroke="#8fcf7a" stroke-width="1.6" fill="none"/><circle cx="163.2" cy="752.8" r="4.5" fill="#1c2f86"/><polygon points="161.8,750.6 161.8,755 165.8,752.8" fill="#fff"/>
<path d="M183.2,745.6L185.8,748L183.2,750.4M187.6,745.6L190.2,748L187.6,750.4" stroke="#b4d6ff" stroke-width="1.3" fill="none"/>
<rect x="198.6" y="742.6" width="156.6" height="21.8" rx="2.4" fill="#3b7ff2"/>
<rect x="199.4" y="743.2" width="155" height="3" rx="1.5" fill="#5a96fa" opacity="0.8"/>
<path d="M208,748.4H213.4L214.8,750H222.6V760H208Z" fill="#f4d672" stroke="#8a6a14" stroke-width="0.7"/><path d="M208,752H222.6" stroke="#fff4c0" stroke-width="0.8"/>
<text x="228" y="757.4" font-size="11" fill="#fff" textLength="34.4" lengthAdjust="spacingAndGlyphs">baocao</text>
<rect x="358.6" y="742.6" width="159" height="21.8" rx="2.4" fill="#2757bd"/>
<rect x="358.6" y="742.6" width="159" height="21.8" rx="2.4" fill="none" stroke="#173f94" stroke-width="1"/>
<rect x="369.6" y="745.6" width="15.4" height="15" fill="#f6f6f6" stroke="#9aa" stroke-width="0.5"/><text x="369.6" y="754" font-size="10" font-weight="bold" fill="#c81e1e">A</text><text x="376.4" y="752.6" font-size="6.5" font-weight="bold" fill="#c81e1e">10</text><rect x="370.6" y="755.6" width="13.4" height="4.4" fill="#e8e8e8"/>
<text x="388.8" y="757.4" font-size="11" fill="#fff" textLength="110" lengthAdjust="spacingAndGlyphs">AutoCAD 2010 - [tu....</text>
<rect x="932" y="738" width="92" height="30" fill="url(#gTray)"/>
<rect x="931" y="738" width="1.4" height="30" fill="#0c4a9a"/><rect x="932.4" y="738" width="1" height="30" fill="#4ab4f6" opacity="0.7"/>
<circle cx="931.6" cy="753" r="8.6" fill="#2a7ae4" stroke="#8ec4fa" stroke-width="1"/><path d="M934,749L929.6,753L934,757" stroke="#fff" stroke-width="2" fill="none"/>
<rect x="942.4" y="745.2" width="14.8" height="14.8" fill="#f4e21c" stroke="#d8d8d0" stroke-width="1.1"/><path d="M942,760.6H957.8V745" stroke="#444" stroke-width="1" fill="none"/><rect x="943.4" y="746.4" width="13" height="13" fill="none" stroke="#fbf6a0" stroke-width="0.8"/><text x="946.8" y="756.2" font-size="8.6" font-weight="bold" fill="#a31a1a">V</text>
<text x="968" y="757.4" font-size="11" fill="#fff" textLength="38" lengthAdjust="spacingAndGlyphs">3:51 PM</text>
<path d="M11.6,198.4L59.8,170.6" stroke="#5e1818" stroke-width="1.1"/>
<path d="M12,204.2L33.6,216.6" stroke="#22602a" stroke-width="1.1"/>
<rect x="2.4" y="196.6" width="9.2" height="9.8" fill="#b4e0b4" fill-opacity="0.55" stroke="#1f8a2a" stroke-width="1.2"/>
<path d="M3.4,200.2H6M7.4,202H10.4" stroke="#143c14" stroke-width="1"/>
<rect x="5.8" y="140" width="1.4" height="92.6" fill="#12125a"/>
<rect x="7.2" y="140" width="1.3" height="92.6" fill="#b8b8f0" opacity="0.8"/>
<path d="M50.2,610.2L30,599.4" stroke="#0c7a14" stroke-width="4.2" stroke-linecap="round"/>
<path d="M49.2,608.6L30,598.2" stroke="#4ee04e" stroke-width="1.4"/>
<polygon points="17.6,591.6 32.8,592.6 25.6,602.8" fill="#1fa21f"/>
<polygon points="17.6,591.6 32.8,592.6 30,596.4" fill="#38c238"/>
<path d="M50.2,610.2L70.4,599.4" stroke="#a01010" stroke-width="4.2" stroke-linecap="round"/>
<path d="M51.2,608.4000000000001L70.4,598" stroke="#e03a3a" stroke-width="1.3"/>
<polygon points="83.6,591.4 68.2,592.4 76.8,602.8" fill="#a80e0e"/>
<polygon points="83.6,591.4 72,592.2 78,600" fill="#8a0a0a"/>
<rect x="48.300000000000004" y="584" width="3.8" height="27.000000000000046" fill="#1878c0"/>
<rect x="50.0" y="584" width="1.6" height="26.200000000000045" fill="#1466a6"/>
<path d="M50.6,571.2C53,575 55.6,580 56.2,585.4Q50.6,588.4 45,585.4C45.6,580 48.2,575 50.6,571.2Z" fill="#2484d8"/>
<path d="M50.6,571.2C53,575 55.6,580 56.2,585.4Q54,586.8 51.4,587Z" fill="#1a6cba"/>
<text x="55" y="566" font-size="13.4" fill="#4a92d6" textLength="9" lengthAdjust="spacingAndGlyphs">Z</text>
<path d="M85.2,574.4L93.8,583M93.8,574.4L85.2,583" stroke="#c43c3c" stroke-width="0.9"/>
<path d="M29,574.8L33.6,579.6L38.4,574.8M33.6,579.6V583.4" stroke="#6ccc6c" stroke-width="1" fill="none"/>
<ellipse cx="951.1" cy="177.4" rx="50.8" ry="30.4" fill="#d9d9d9"/>
<ellipse cx="951.1" cy="176" rx="41.2" ry="23.6" fill="#bdbdbd" stroke="#8e8e8e" stroke-width="1.8"/>
<text transform="translate(910.4,150.0) rotate(38) scale(1,0.8)" font-size="13" font-weight="bold" fill="#828282">W</text>
<text transform="translate(980.2,152.0) rotate(24) scale(1,0.8)" font-size="12.5" font-weight="bold" fill="#828282">N</text>
<text transform="translate(903.0,197.0) rotate(24) scale(1.2,0.9)" font-size="16.5" font-weight="bold" fill="#828282">S</text>
<text transform="translate(981.6,195.6) rotate(30) scale(1.15,0.9)" font-size="16" font-weight="bold" fill="#828282">E</text>
<polygon points="951.1,120.0 980.4,135.4 951.1,150.5 921.4,134.6" fill="#dadada"/>
<polygon points="921.4,134.6 951.1,150.5 951.0,186.2 923.6,166.9" fill="url(#gCubeL)"/>
<polygon points="951.1,150.5 980.4,135.4 979.0,168.0 951.0,186.2" fill="#c9c9c9"/>
<path d="M951.1,120.0 980.4,135.4 979.0,168.0 951.0,186.2 923.6,166.9 921.4,134.6Z M921.4,134.6L951.1,150.5L980.4,135.4 M951.1,150.5L951.0,186.2" transform="" fill="none" stroke="#767676" stroke-width="0.8"/>
<text transform="matrix(0.86,0.46,0,1,929.2,158.6)" font-size="9.4" font-weight="bold" fill="#7a7a7a" textLength="17.6" lengthAdjust="spacingAndGlyphs">LEFT</text>
<text transform="matrix(0.86,-0.5,0,1,955.8,169.0)" font-size="9.4" font-weight="bold" fill="#7a7a7a" textLength="23.4" lengthAdjust="spacingAndGlyphs">FRONT</text>
<text transform="matrix(0.84,-0.43,0.8,0.42,945.2,140.0)" font-size="9.2" font-weight="bold" fill="#7c7c7c" textLength="17.4" lengthAdjust="spacingAndGlyphs">TOP</text>
<rect x="917.4" y="227.6" width="66.8" height="16.6" rx="3.4" fill="#d1d1d1" stroke="#c9c9c9" stroke-width="0.8"/>
<text x="921.4" y="239.5" font-size="10" fill="#8c8c8c" textLength="43.6" lengthAdjust="spacingAndGlyphs">Unnamed</text>
<polygon points="967.8,233.2 979.6,233.2 973.7,237.8" fill="#bcbcbc"/>
<!--UI4-->
</svg>
</body></html>
